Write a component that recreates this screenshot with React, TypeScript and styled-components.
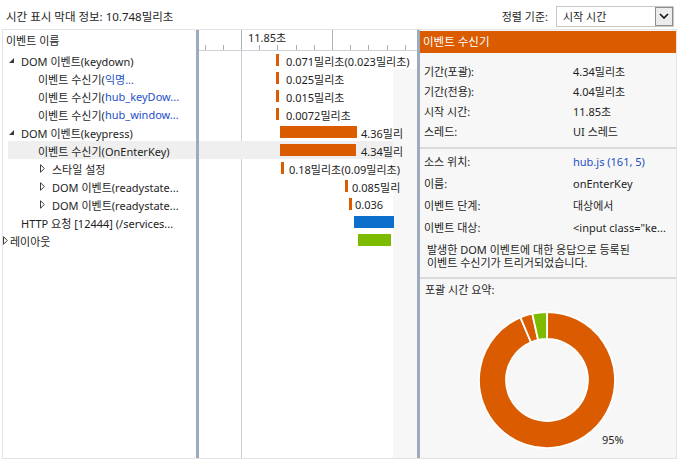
import styled, { createGlobalStyle } from 'styled-components';

const ORANGE = '#da5b00';
const BLUE = '#0b6fcb';
const GREEN = '#7cbb00';
const LINK = '#1d4fc6';
const FONT = '"Noto Sans", "Noto Sans CJK KR", sans-serif';

const GlobalStyle = createGlobalStyle`
  html, body {
    margin: 0;
    padding: 0;
    background: #fff;
  }
  body {
    font-family: ${FONT};
    font-size: 11px;
    color: #1e1e1e;
  }
`;

type TreeItem = {
  x: number;
  twisty?: 'open' | 'closed';
  gap?: number;
  text: string;
  link?: string;
  selected?: boolean;
};

const tree: TreeItem[] = [
  { x: 9, twisty: 'open', gap: 7, text: 'DOM 이벤트(keydown)' },
  { x: 38, text: '이벤트 수신기(', link: '익명...' },
  { x: 38, text: '이벤트 수신기(', link: 'hub_keyDow...' },
  { x: 38, text: '이벤트 수신기(', link: 'hub_window...' },
  { x: 9, twisty: 'open', gap: 7, text: 'DOM 이벤트(keypress)' },
  { x: 38, text: '이벤트 수신기(OnEnterKey)', selected: true },
  { x: 40, twisty: 'closed', gap: 7, text: '스타일 설정' },
  { x: 40, twisty: 'closed', gap: 7, text: 'DOM 이벤트(readystate...' },
  { x: 40, twisty: 'closed', gap: 7, text: 'DOM 이벤트(readystate...' },
  { x: 21, text: 'HTTP 요청 [12444] (/services...' },
  { x: 3, twisty: 'closed', gap: 2, text: '레이아웃' },
];

type BarItem = {
  x: number;
  w: number;
  color: string;
  label?: string;
  gap?: number;
  variant?: 'plain' | 'selected';
};

const bars: BarItem[] = [
  { x: 276, w: 3, color: ORANGE, label: '0.071밀리초(0.023밀리초)', gap: 7, variant: 'plain' },
  { x: 276, w: 3, color: ORANGE, label: '0.025밀리초', gap: 7 },
  { x: 276, w: 3, color: ORANGE, label: '0.015밀리초', gap: 7 },
  { x: 276, w: 3, color: ORANGE, label: '0.0072밀리초', gap: 7 },
  { x: 280, w: 77, color: ORANGE, label: '4.36밀리', gap: 4 },
  { x: 280, w: 76, color: ORANGE, label: '4.34밀리', gap: 5, variant: 'selected' },
  { x: 281, w: 3, color: ORANGE, label: '0.18밀리초(0.09밀리초)', gap: 5 },
  { x: 345, w: 3, color: ORANGE, label: '0.085밀리', gap: 4 },
  { x: 349, w: 3, color: ORANGE, label: '0.036', gap: 3 },
  { x: 354, w: 40, color: BLUE },
  { x: 358, w: 33, color: GREEN },
];

const details1 = [
  ['기간(포괄):', '4.34밀리초'],
  ['기간(전용):', '4.04밀리초'],
  ['시작 시간:', '11.85초'],
  ['스레드:', 'UI 스레드'],
];

const details2: [string, string, boolean?][] = [
  ['소스 위치:', 'hub.js (161, 5)', true],
  ['이름:', 'onEnterKey'],
  ['이벤트 단계:', '대상에서'],
  ['이벤트 대상:', '<input class="ke...'],
];

// donut geometry
const CX = 90;
const CY = 70;
const pt = (r: number, a: number) => {
  const rad = (a * Math.PI) / 180;
  return [CX + r * Math.sin(rad), CY - r * Math.cos(rad)];
};
const arc = (a0: number, a1: number, r0: number, r1: number) => {
  const large = a1 - a0 > 180 ? 1 : 0;
  const [x0, y0] = pt(r1, a0);
  const [x1, y1] = pt(r1, a1);
  const [x2, y2] = pt(r0, a1);
  const [x3, y3] = pt(r0, a0);
  return `M${x0} ${y0} A${r1} ${r1} 0 ${large} 1 ${x1} ${y1} L${x2} ${y2} A${r0} ${r0} 0 ${large} 0 ${x3} ${y3}Z`;
};
const slices = [
  { a0: 0, a1: 337, color: ORANGE },
  { a0: 337, a1: 347.5, color: ORANGE },
  { a0: 347.5, a1: 360, color: GREEN },
];

const ticks = Array.from({ length: 12 }, (_, i) => 42 + (i - 2) * 18.2);

const Twisty = ({ kind, gap }: { kind: 'open' | 'closed'; gap: number }) =>
  kind === 'open' ? (
    <TwistyIcon width="5" height="5" viewBox="0 0 5 5" $gap={gap}>
      <polygon points="5,0 5,5 0,5" fill="#3c3c3c" />
    </TwistyIcon>
  ) : (
    <TwistyIcon width="5" height="9" viewBox="0 0 5 9" $gap={gap}>
      <polygon points="0.5,0.7 4.3,4.5 0.5,8.3" fill="none" stroke="#3c3c3c" strokeWidth="1" />
    </TwistyIcon>
  );

export default function App() {
  return (
    <Page>
      <GlobalStyle />
      <TopBar>
        <Title>시간 표시 막대 정보: 10.748밀리초</Title>
        <SortBox>
          <span>정렬 기준:</span>
          <Select>
            <SelectText>시작 시간</SelectText>
            <ArrowButton>
              <svg width="10" height="6" viewBox="0 0 10 6">
                <polyline points="1,1 5,5 9,1" fill="none" stroke="#111" strokeWidth="1.6" />
              </svg>
            </ArrowButton>
          </Select>
        </SortBox>
      </TopBar>

      <Main>
        <TreePane>
          <TreeHeader>이벤트 이름</TreeHeader>
          {tree.map((item, i) => (
            <TreeRow key={i} $indent={item.x - 3} $selected={!!item.selected}>
              {item.twisty && <Twisty kind={item.twisty} gap={item.gap ?? 7} />}
              <span>{item.text}</span>
              {item.link && <LinkText>{item.link}</LinkText>}
            </TreeRow>
          ))}
        </TreePane>

        <Divider />

        <Timeline>
          <Ruler>
            <svg width="218" height="20" viewBox="0 0 218 20">
              {ticks.map((x, i) => {
                const major = i === 2 || i === 7;
                return (
                  <line
                    key={i}
                    x1={Math.round(x) + 0.5}
                    x2={Math.round(x) + 0.5}
                    y1={major ? 0 : 15}
                    y2={20}
                    stroke="#a8b0bb"
                    strokeWidth="1"
                  />
                );
              })}
              <text x="49" y="12" fontSize="11" fill="#1e1e1e" fontFamily={FONT}>
                11.85초
              </text>
            </svg>
          </Ruler>
          <TimelineBody>
            {bars.map((b, i) => (
              <TimelineRow key={i} $variant={b.variant}>
                <Bar $color={b.color} style={{ marginLeft: b.x - 199, width: b.w }} />
                {b.label && <BarLabel $gap={b.gap ?? 5}>{b.label}</BarLabel>}
              </TimelineRow>
            ))}
          </TimelineBody>
        </Timeline>

        <Divider />

        <DetailPane>
          <PaneHeader>이벤트 수신기</PaneHeader>
          <DetailGrid $row={20} $pad="8px 0 6px 4px">
            {details1.map(([k, v]) => (
              <>
                <span key={k}>{k}</span>
                <span key={k + 'v'}>{v}</span>
              </>
            ))}
          </DetailGrid>
          <Separator />
          <DetailGrid $row={22} $pad="1px 0 0 4px">
            {details2.map(([k, v, link]) => (
              <>
                <span key={k}>{k}</span>
                <Value key={k + 'v'} $link={!!link}>
                  {v}
                </Value>
              </>
            ))}
          </DetailGrid>
          <Description>
            <DescLine>발생한 DOM 이벤트에 대한 응답으로 등록된</DescLine>
            <DescLine>이벤트 수신기가 트리거되었습니다.</DescLine>
          </Description>
          <Separator />
          <Summary>
            <SummaryTitle>포괄 시간 요약:</SummaryTitle>
            <ChartWrap>
              <svg width="180" height="148" viewBox="0 0 180 148">
                {slices.map((s, i) => (
                  <path key={i} d={arc(s.a0, s.a1, 41, 68)} fill={s.color} stroke="#fff" strokeWidth="1.8" />
                ))}
                <text x="145" y="134" fontSize="11" fill="#1e1e1e" fontFamily={FONT}>
                  95%
                </text>
              </svg>
            </ChartWrap>
          </Summary>
        </DetailPane>
      </Main>
    </Page>
  );
}

const Page = styled.div`
  width: 677px;
  height: 460px;
  display: flex;
  flex-direction: column;
  overflow: hidden;
`;

const TopBar = styled.div`
  height: 29px;
  box-sizing: border-box;
  padding: 3px 3px 0 6px;
  display: flex;
  align-items: center;
  justify-content: space-between;
`;

const Title = styled.div`
  font-size: 11.5px;
`;

const SortBox = styled.div`
  display: flex;
  align-items: center;
  gap: 8px;
`;

const Select = styled.div`
  width: 118px;
  height: 21px;
  box-sizing: border-box;
  border: 1px solid #c8c8c8;
  display: flex;
  background: #fff;
`;

const SelectText = styled.div`
  flex: 1;
  padding-left: 6px;
  line-height: 19px;
`;

const ArrowButton = styled.div`
  width: 18px;
  box-sizing: border-box;
  border: 1px solid #8e8e8e;
  background: #ececec;
  display: flex;
  align-items: center;
  justify-content: center;
`;

const Main = styled.div`
  height: 430px;
  margin-left: 2px;
  box-sizing: border-box;
  border: 1px solid #e3e3e3;
  display: flex;
`;

const TreePane = styled.div`
  width: 193px;
  flex: none;
  overflow: hidden;
  background: #fff;
`;

const TreeHeader = styled.div`
  height: 21px;
  line-height: 21px;
  padding-left: 3px;
`;

const TreeRow = styled.div<{ $indent: number; $selected: boolean }>`
  height: 18px;
  box-sizing: border-box;
  padding: 1px 0 0 ${(p) => p.$indent}px;
  display: flex;
  align-items: center;
  white-space: nowrap;
  background: ${(p) =>
    p.$selected ? 'linear-gradient(to right, transparent 5px, #efefef 5px)' : 'transparent'};
`;

const TwistyIcon = styled.svg<{ $gap: number }>`
  flex: none;
  margin-right: ${(p) => p.$gap}px;
`;

const LinkText = styled.span`
  color: ${LINK};
`;

const Divider = styled.div`
  width: 3px;
  flex: none;
  background: #9eabbd;
`;

const Timeline = styled.div`
  width: 218px;
  flex: none;
  display: flex;
  flex-direction: column;
  overflow: hidden;
`;

const Ruler = styled.div`
  height: 21px;
  box-sizing: border-box;
  border-bottom: 1px solid #d0d3d8;
  background: #fff;
  svg {
    display: block;
  }
`;

const TimelineBody = styled.div`
  flex: 1;
  background:
    linear-gradient(to right, transparent 194px, #f7f7f7 194px),
    linear-gradient(to right, transparent 42px, #c8ced6 42px, #c8ced6 43px, transparent 43px),
    #fff;
`;

const TimelineRow = styled.div<{ $variant?: 'plain' | 'selected' }>`
  height: 18px;
  display: flex;
  align-items: center;
  white-space: nowrap;
  background: ${(p) =>
    p.$variant === 'selected'
      ? 'linear-gradient(to right, #efefef 194px, transparent 194px)'
      : p.$variant === 'plain'
        ? 'linear-gradient(to right, transparent 194px, #fff 194px)'
        : 'transparent'};
`;

const Bar = styled.div<{ $color: string }>`
  height: 12px;
  flex: none;
  background: ${(p) => p.$color};
`;

const BarLabel = styled.span<{ $gap: number }>`
  margin-left: ${(p) => p.$gap}px;
  padding-top: 1px;
`;

const DetailPane = styled.div`
  flex: 1;
  min-width: 0;
  display: flex;
  flex-direction: column;
  padding-top: 1px;
  background: #f7f7f7;
  overflow: hidden;
`;

const PaneHeader = styled.div`
  height: 22px;
  line-height: 22px;
  padding-left: 3px;
  background: ${ORANGE};
  color: #fff;
  font-size: 11.5px;
`;

const DetailGrid = styled.div<{ $row: number; $pad: string }>`
  display: grid;
  grid-template-columns: 149px 1fr;
  grid-auto-rows: ${(p) => p.$row}px;
  align-items: center;
  padding: ${(p) => p.$pad};
  white-space: nowrap;
`;

const Value = styled.span<{ $link: boolean }>`
  color: ${(p) => (p.$link ? LINK : 'inherit')};
`;

const Separator = styled.div`
  height: 2px;
  background: #dadada;
`;

const Description = styled.div`
  padding: 5px 0 8px 7px;
`;

const DescLine = styled.div`
  height: 13px;
  line-height: 13px;
  white-space: nowrap;
`;

const Summary = styled.div`
  flex: 1;
  display: flex;
  flex-direction: column;
`;

const SummaryTitle = styled.div`
  padding: 3px 0 0 5px;
  line-height: 16px;
`;

const ChartWrap = styled.div`
  display: flex;
  justify-content: center;
  padding: 12px 3px 0 0;
  svg {
    display: block;
  }
`;
